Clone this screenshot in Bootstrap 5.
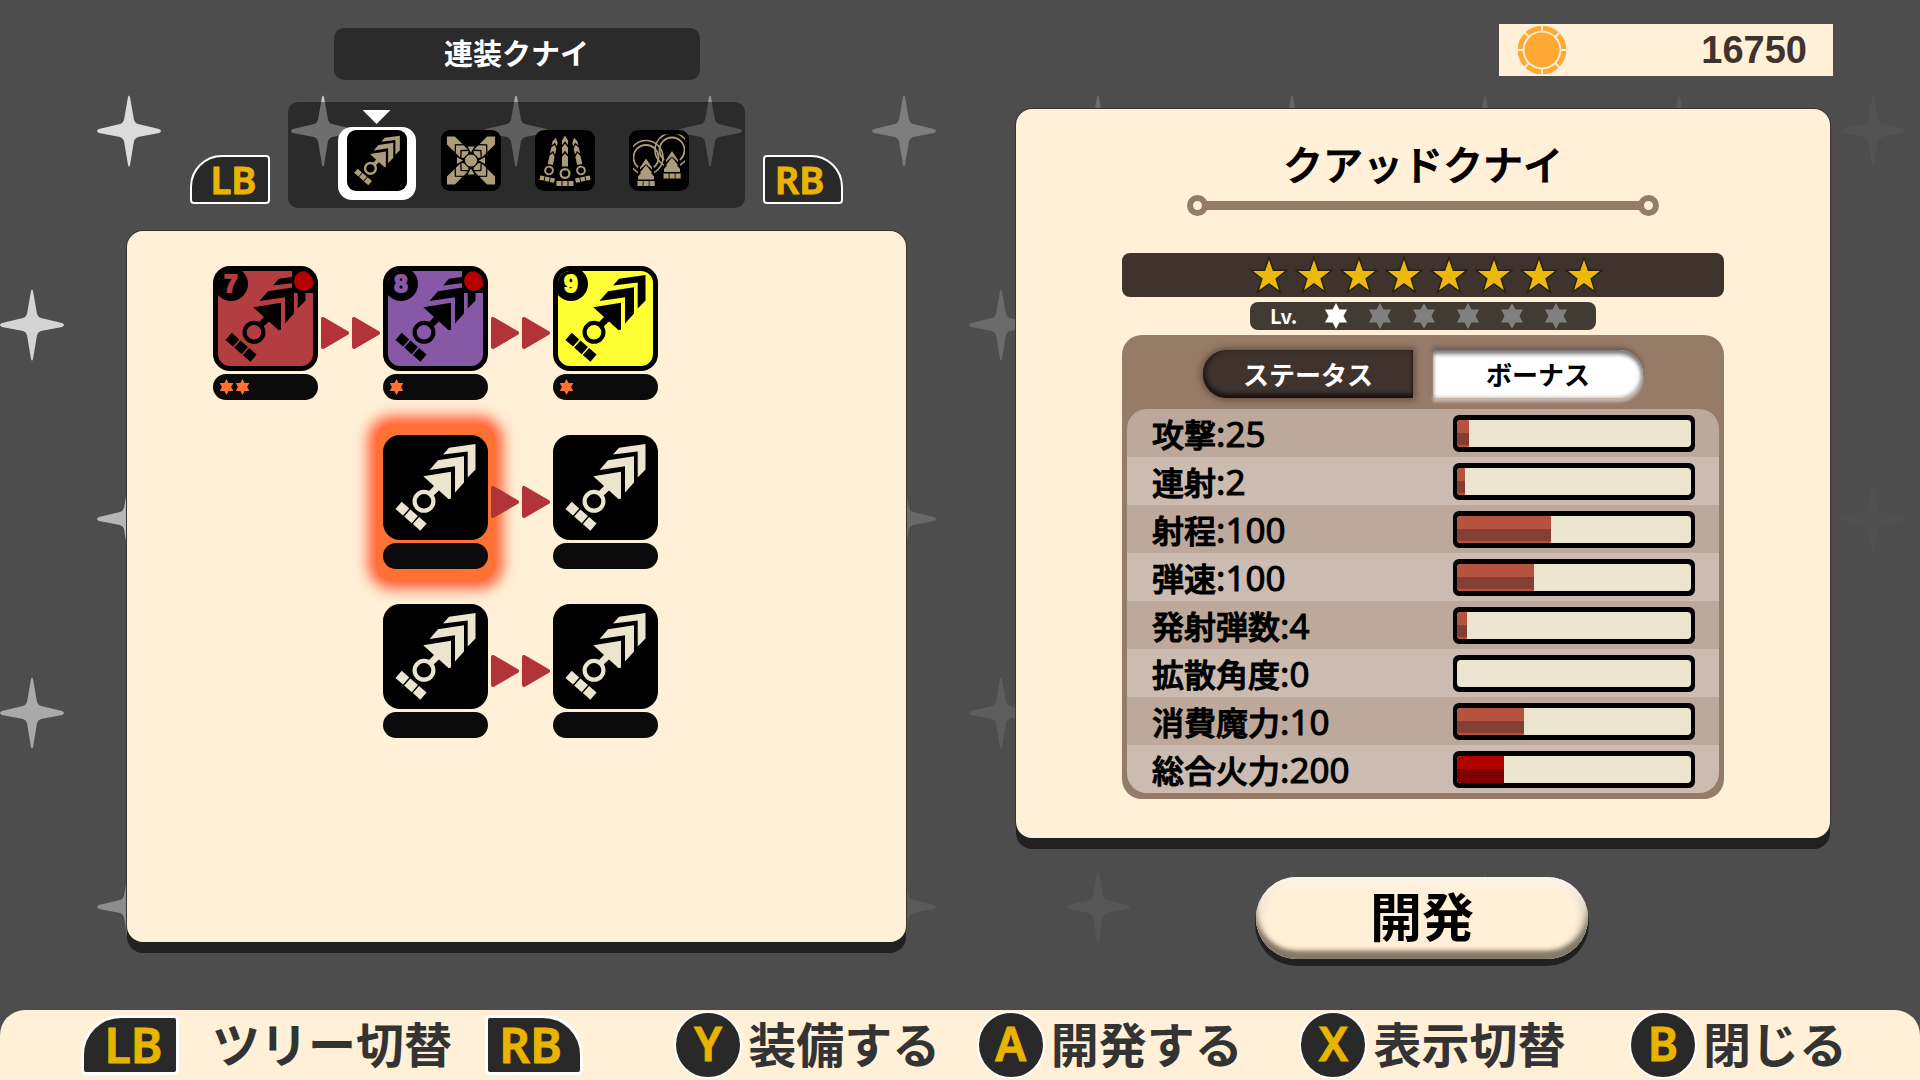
<!DOCTYPE html>
<html lang="ja">
<head>
<meta charset="utf-8">
<meta name="viewport" content="width=device-width, initial-scale=1">
<title>連装クナイ</title>
<link href="https://cdn.jsdelivr.net/npm/bootstrap@5.3.0/dist/css/bootstrap.min.css" rel="stylesheet">
<style>
:root{--cream:#fff0d7;--ink:#292929;--gold:#e8b400;--brown:#967b68;--dark:#3f332e}
body{background:#4d4d4d;font-family:"Noto Sans CJK JP",sans-serif;color:#000;overflow-x:hidden}
button{font-family:inherit;border:0;padding:0;background:none}
.sky{position:absolute;inset:0;width:100%;height:100%;z-index:-1}
.stage{padding:24px 87px 0 127px;gap:110px}
.col-tree{flex:779 1 0;padding-top:4px}
.col-info{flex:817 1 0}
.panel{background:var(--cream);border-radius:16px;box-shadow:0 11px 0 #212121,0 0 0 1px #3a3530}
/* header of the tree */
.tree-title{width:366px;height:52px;border-radius:10px;background:#2b2b2b;color:#fff;font-size:29px;line-height:48px;font-weight:700;margin-bottom:22px}
.switch{gap:18px;margin-bottom:23px}
.weapon-bar{width:457px;height:106px;border-radius:10px;background:rgba(0,0,0,.44);gap:34px;padding:28px 0 0 2px}
.weapon{position:relative;width:60px;height:61px}
.weapon svg{position:relative;display:block;width:60px;height:61px;background:#000;border-radius:9px;color:#ac9c79}
.weapon.active::before{content:"";position:absolute;inset:-3px -9px -9px;background:#fff;border-radius:14px}
.weapon.active::after{content:"";position:absolute;left:16px;top:-20px;width:28px;height:14px;background:#fff;clip-path:polygon(0 0,100% 0,50% 100%)}
.bumper{display:flex;align-items:center;justify-content:center;width:80px;height:49px;margin-bottom:4px;background:var(--ink);border:2px solid #fff;color:var(--gold);font:600 38px/45px "Noto Sans",sans-serif;-webkit-text-stroke:1px var(--gold)}
.bumper-l{border-radius:32px 4px 4px 4px;padding-left:7px}
.bumper-r{border-radius:4px 32px 4px 4px;padding-right:7px}
/* tree */
.tree{height:711px;padding:35px 86px}
.branches{display:grid;grid-template-columns:105px 65px 105px 65px 105px;row-gap:35px}
.node{position:relative;display:flex;flex-direction:column;gap:3px;width:105px}
.tile{position:relative;display:block;width:105px;height:105px;border-radius:17px;background:#000;color:#ebe5cf;overflow:hidden}
.tile svg{display:block;width:105px;height:105px}
.tile.ranked{border:5px solid #000;color:#000}
.tile.ranked svg{margin:-5px}
.fill-red{background:#b23e42}.fill-violet{background:#8658a6}.fill-yellow{background:#ffff33}
.rank{position:absolute;left:-4px;top:-4px;width:34px;height:34px;border-radius:50%;background:#000;text-align:center;font:700 24px/34px "Liberation Sans",sans-serif;-webkit-text-stroke:2px}
.fill-red .rank{color:#b23e42}.fill-violet .rank{color:#8658a6}.fill-yellow .rank{color:#ffff33}
.owned{position:absolute;right:-1px;top:-1px;width:22px;height:23px;background:#000}
.owned::after{content:"";position:absolute;left:2px;top:1px;width:20px;height:20px;border-radius:50%;background:#b40000}
.pips{display:flex;align-items:center;height:26px;border-radius:13px;background:#0b0b0b;padding-left:6px;gap:1px;color:#ff7033}
.pips svg{width:15px;height:16px}
.node.chosen::before{content:"";position:absolute;inset:-11px -7px -12px;border-radius:16px;background:#ff7033;box-shadow:0 0 14px 8px #ff6038}
.node.chosen>*{z-index:1}
.link-arrows{display:flex;align-items:center;justify-content:center;gap:3px;position:relative;z-index:2}
.link-arrows svg{width:28px;height:32px}
/* info */
.purse{width:334px;height:52px;background:var(--cream);padding:0 26px 0 18px;color:var(--dark);font:700 38px/52px "Liberation Sans",sans-serif;margin-bottom:33px}
.info{height:729px;margin-right:3px;padding:28px 106px 0}
.info-name{font-size:40px;line-height:52px;font-weight:500;margin:0 0 5px;-webkit-text-stroke:1px}
.rule{display:flex;width:472px;height:22px;margin:0 auto 37px;align-items:center}
.rule i{flex:none;width:21px;height:21px;border:6px solid var(--brown);border-radius:50%}
.rule b{flex:1;height:9px;background:var(--brown);margin:0 -2px}
.rating{height:44px;border-radius:8px;background:var(--dark);gap:7px;margin-bottom:5px;padding-left:7px}
.rating svg{width:38px;height:38px}
.level{width:346px;height:28px;border-radius:8px;background:#413b33;margin:0 auto 5px;color:#fff;font-size:20px;line-height:28px;font-weight:700;gap:20px;padding-left:20px}
.level svg{width:24px;height:26px;color:#808080}
.level svg.on{color:#fff}
.level span{width:34px}
.sheet{background:var(--brown);border-radius:20px;padding:15px 5px 6px}
.modes{gap:20px;margin-bottom:11px}
.mode{width:210px;height:48px;font-size:26px;line-height:46px;font-weight:700}
.mode-status{border-radius:24px 0 0 24px;background:#3f332e;color:#fff;box-shadow:inset 0 -4px 4px #17110f,inset 3px 0 4px #2a211e,0 0 6px 2px rgba(60,40,30,.55)}
.mode-bonus{border-radius:0 24px 24px 0;background:#fff;color:#000;box-shadow:inset 0 4px 4px #777,inset -2px 0 4px #aaa,0 4px 3px rgba(255,255,255,.45),0 -3px 4px rgba(60,40,30,.4)}
.stats{width:100%;border-radius:20px;overflow:hidden;border-collapse:collapse}
.stats tr{height:48px;background:#cbbbb1}
.stats tr:nth-child(odd){background:#bda99b}
.stats th{padding:0 0 0 25px;font-size:32px;line-height:48px;font-weight:500;white-space:nowrap;-webkit-text-stroke:1px}
.stats th span{font:400 35px/40px "Noto Sans",sans-serif}
.stats td{padding:0 24px 0 0;width:266px}
.gauge{height:37px;border:solid #000;border-width:5px 4px;border-radius:6px;background:#000}
.gauge div{height:27px;background:#ebe5cf;border-radius:4px;overflow:hidden}
.gauge span{display:block;height:27px;background:linear-gradient(#b5533e 48%,#833f34 48% 93%,#b5533e 93%)}
.gauge .total{background:linear-gradient(#b20000 48%,#800000 48%)}
.develop{width:332px;height:82px;border-radius:41px;background:var(--cream);font-size:52px;line-height:76px;padding-bottom:6px;font-weight:700;margin:39px 5px 0 0;box-shadow:0 6px 0 1px #212121,inset 0 -8px 4px #857868,inset 0 6px 8px #fff8ef,inset -3px -4px 10px #a89884,inset 3px 0 8px #d8c8b2}
/* footer */
.guide{display:grid;grid-template-columns:594fr 303fr 323fr 330fr 215fr;height:70px;padding:0 73px 0 81px;background:var(--cream);border-radius:25px 25px 0 0;color:#333;font-size:48px;line-height:60px;font-weight:700}
.guide a{color:inherit;text-decoration:none;display:flex;align-items:center;white-space:nowrap;gap:6px}
.guide .bumper{width:98px;height:60px;margin:0;border-width:3px;border-radius:40px 5px 5px 5px;font-size:48px;line-height:54px}
.guide .bumper-r{border-radius:5px 40px 5px 5px}
.guide .trees{gap:33px}
.caption-text{padding-bottom:7px}
.pad{flex:none;display:block;width:68px;height:68px;border-radius:50%;border:2px solid #fff;background:var(--ink);color:var(--gold);text-align:center;font:600 46px/60px "Noto Sans",sans-serif;-webkit-text-stroke:1px var(--gold)}
</style>
</head>
<body>
<svg width="0" height="0" class="position-absolute" aria-hidden="true">
<defs>
<path id="spark" d="M-32 0Q-32-1-30-2L-9-7Q-6-8-5-11L-1-34Q0-37 1-34L5-11Q6-8 9-7L30-2Q32-1 32 0Q32 1 30 2L9 6Q6 7 5 10L1 34Q0 37-1 34L-5 10Q-6 7-9 6L-30 2Q-32 1-32 0Z" fill="#fff"/>
<symbol id="kunai" viewBox="0 0 105 105"><g fill="currentColor"><path d="M60 19.5 66 12.7 92.5 9V34.5L84.7 42.5V16.5Z"/><path d="M46.500 35 55 25.300 81 21.300V47.500L72 57.500V31.200Z"/><path d="M40.300 41.300 68 36.700V63.500L65.700 64.300 56 55.500 49 62 44.500 57.500 51 51Z"/><g transform="rotate(41 28 81.300)"><path d="M11.500 76.500H21.500V86H11.500ZM23 76.500H33V86H23ZM34.500 76.500H44.500V86H34.500Z"/></g></g><circle cx="41" cy="66.300" r="9.400" fill="none" stroke="currentColor" stroke-width="4.200"/></symbol>
<symbol id="hex" viewBox="0 0 24 26"><path fill="currentColor" d="M12 0 15.400 6.500H23L19.500 13 23 19.500H15.400L12 26 8.600 19.500H1L4.500 13 1 6.500H8.600Z"/></symbol>
<symbol id="star" viewBox="0 0 38 38"><path d="M19 1.500 23.400 14.300H37L26.200 22.700 30.300 36 19 28 7.700 36 11.800 22.700 1 14.300H14.600Z" fill="#ecb80a" stroke="#282110" stroke-width="1.500"/></symbol>
<symbol id="tri" viewBox="0 0 28 32"><path d="M2 2V30L26 16Z" fill="#b23338" stroke="#b23338" stroke-width="4" stroke-linejoin="round"/></symbol>
<g id="arm"><path fill="currentColor" d="M0-34 5.600-28.400V-9L3-7H-3L-5.600-9V-28.400Z"/><path d="M-7-15.500 0-22 7-15.500M-6-8.500 0-14 6-8.500" fill="none" stroke="#000" stroke-width="1.300"/></g>
<g id="spear"><path fill="currentColor" d="M30 5 33 10V36H27V10Z"/><path d="M26 17 30 12 34 17M26 26.500 30 21.500 34 26.500" fill="none" stroke="#000" stroke-width="1.500"/><circle cx="30" cy="43" r="4.400" fill="none" stroke="currentColor" stroke-width="2.200"/><path fill="currentColor" d="M21.500 50.500H26.500V55.500H21.500ZM27.500 50.500H32.500V55.500H27.500ZM33.500 50.500H38.500V55.500H33.500Z"/></g>
<g id="ship"><circle cx="17" cy="27" r="12.500" fill="none" stroke="currentColor" stroke-width="1.800"/><circle cx="17" cy="27" r="17" fill="none" stroke="currentColor" stroke-width="1.600"/><path d="M17 26 25 37 25 49H9V37Z" fill="#000"/><path fill="currentColor" d="M17 28 23 37V39L17 33.500 11 39V37ZM17 34.500 23 42 22 42.500 25 46V49H9V46L12 42.500 11 42ZM8.500 50.500H13.700V55.500H8.500ZM14.500 50.500H19.700V55.500H14.500ZM20.500 50.500H25.700V55.500H20.500Z"/></g>
<clipPath id="field"><path d="M4 4H56V57H4Z"/></clipPath>
</defs>
</svg>

<svg class="sky" viewBox="0 0 1920 1080" preserveAspectRatio="xMidYMid slice" aria-hidden="true">
<use href="#spark" x="129" y="131" opacity=".8"/><use href="#spark" x="323" y="131" opacity=".68"/><use href="#spark" x="516" y="131" opacity=".52"/><use href="#spark" x="710" y="131" opacity=".4"/><use href="#spark" x="904" y="131" opacity=".28"/><use href="#spark" x="1098" y="131" opacity=".18"/><use href="#spark" x="1292" y="131" opacity=".14"/><use href="#spark" x="1485" y="131" opacity=".1"/><use href="#spark" x="1679" y="131" opacity=".07"/><use href="#spark" x="1873" y="131" opacity=".04"/>
<use href="#spark" x="32" y="325" opacity=".76"/><use href="#spark" x="1001" y="325" opacity=".17"/>
<use href="#spark" x="129" y="519" opacity=".6"/><use href="#spark" x="904" y="519" opacity=".16"/><use href="#spark" x="1873" y="519" opacity=".02"/>
<use href="#spark" x="32" y="713" opacity=".52"/><use href="#spark" x="1001" y="713" opacity=".09"/>
<use href="#spark" x="129" y="907" opacity=".36"/><use href="#spark" x="904" y="907" opacity=".08"/><use href="#spark" x="1098" y="907" opacity=".05"/><use href="#spark" x="1292" y="907" opacity=".04"/><use href="#spark" x="1485" y="907" opacity=".03"/>
</svg>

<div class="d-flex flex-column min-vh-100">
<main class="stage d-flex flex-grow-1">
  <section class="col-tree">
    <h1 class="tree-title mx-auto text-center mt-0">連装クナイ</h1>
    <div class="switch d-flex justify-content-center align-items-end">
      <button type="button" class="bumper bumper-l">LB</button>
      <div class="weapon-bar d-flex justify-content-center align-items-start">
        <button type="button" class="weapon active" aria-label="連装クナイ"><svg viewBox="0 0 105 105"><use href="#kunai"/></svg></button>
        <button type="button" class="weapon" aria-label="十字"><svg viewBox="0 0 60 60"><g transform="translate(30 30)"><use href="#arm" transform="rotate(45)"/><use href="#arm" transform="rotate(135)"/><use href="#arm" transform="rotate(225)"/><use href="#arm" transform="rotate(315)"/><circle r="6.500" fill="currentColor" stroke="#000"/><path fill="currentColor" d="M-3.500-14H3.500L0-8ZM-3.500 14H3.500L0 8ZM-14-3.500V3.500L-8 0ZM14-3.500V3.500L8 0Z"/></g></svg></button>
        <button type="button" class="weapon" aria-label="三連"><svg viewBox="0 0 60 60"><use href="#spear"/><use href="#spear" transform="translate(16.400 28.800) rotate(12) scale(.88) translate(-30 -30)"/><use href="#spear" transform="translate(43.600 28.800) rotate(-12) scale(.88) translate(-30 -30)"/></svg></button>
        <button type="button" class="weapon" aria-label="円陣"><svg viewBox="0 0 60 60"><g clip-path="url(#field)"><use href="#ship" x="26" y="-7.500"/><use href="#ship"/></g></svg></button>
      </div>
      <button type="button" class="bumper bumper-r">RB</button>
    </div>
    <div class="panel tree">
      <div class="branches">
        <button type="button" class="node"><span class="tile ranked fill-red"><svg><use href="#kunai"/></svg><span class="rank">7</span><span class="owned"></span></span><span class="pips"><svg><use href="#hex"/></svg><svg><use href="#hex"/></svg></span></button>
        <div class="link-arrows"><svg><use href="#tri"/></svg><svg><use href="#tri"/></svg></div>
        <button type="button" class="node"><span class="tile ranked fill-violet"><svg><use href="#kunai"/></svg><span class="rank">8</span><span class="owned"></span></span><span class="pips"><svg><use href="#hex"/></svg></span></button>
        <div class="link-arrows"><svg><use href="#tri"/></svg><svg><use href="#tri"/></svg></div>
        <button type="button" class="node"><span class="tile ranked fill-yellow"><svg><use href="#kunai"/></svg><span class="rank">9</span></span><span class="pips"><svg><use href="#hex"/></svg></span></button>

        <div></div><div></div>
        <button type="button" class="node chosen" aria-label="クアッドクナイ"><span class="tile"><svg><use href="#kunai"/></svg></span><span class="pips"></span></button>
        <div class="link-arrows"><svg><use href="#tri"/></svg><svg><use href="#tri"/></svg></div>
        <button type="button" class="node" aria-label="クナイ"><span class="tile"><svg><use href="#kunai"/></svg></span><span class="pips"></span></button>

        <div></div><div></div>
        <button type="button" class="node" aria-label="クナイ"><span class="tile"><svg><use href="#kunai"/></svg></span><span class="pips"></span></button>
        <div class="link-arrows"><svg><use href="#tri"/></svg><svg><use href="#tri"/></svg></div>
        <button type="button" class="node" aria-label="クナイ"><span class="tile"><svg><use href="#kunai"/></svg></span><span class="pips"></span></button>
      </div>
    </div>
  </section>

  <section class="col-info d-flex flex-column">
    <div class="purse d-flex align-items-center justify-content-between align-self-end">
      <svg width="50" height="50" viewBox="-25 -25 50 50"><circle r="21.800" fill="none" stroke="#ffa834" stroke-width="5"/><path d="M0-25V25M-25 0H25M-18-18 18 18M-18 18 18-18" stroke="#fff0d7" stroke-width="2"/><circle r="17.500" fill="#ffa834"/></svg>
      <span>16750</span>
    </div>
    <div class="panel info">
      <h2 class="info-name text-center">クアッドクナイ</h2>
      <div class="rule"><i></i><b></b><i></i></div>
      <div class="rating d-flex justify-content-center align-items-center"><svg><use href="#star"/></svg><svg><use href="#star"/></svg><svg><use href="#star"/></svg><svg><use href="#star"/></svg><svg><use href="#star"/></svg><svg><use href="#star"/></svg><svg><use href="#star"/></svg><svg><use href="#star"/></svg></div>
      <div class="level d-flex align-items-center"><span>Lv.</span><svg class="on"><use href="#hex"/></svg><svg><use href="#hex"/></svg><svg><use href="#hex"/></svg><svg><use href="#hex"/></svg><svg><use href="#hex"/></svg><svg><use href="#hex"/></svg></div>
      <div class="sheet">
        <div class="modes d-flex justify-content-center">
          <button type="button" class="mode mode-status">ステータス</button>
          <button type="button" class="mode mode-bonus">ボーナス</button>
        </div>
        <table class="stats">
          <tbody>
          <tr><th scope="row">攻撃<span>:25</span></th><td><div class="gauge"><div><span style="width:5%"></span></div></div></td></tr>
          <tr><th scope="row">連射<span>:2</span></th><td><div class="gauge"><div><span style="width:3.4%"></span></div></div></td></tr>
          <tr><th scope="row">射程<span>:100</span></th><td><div class="gauge"><div><span style="width:40%"></span></div></div></td></tr>
          <tr><th scope="row">弾速<span>:100</span></th><td><div class="gauge"><div><span style="width:33%"></span></div></div></td></tr>
          <tr><th scope="row">発射弾数<span>:4</span></th><td><div class="gauge"><div><span style="width:4.3%"></span></div></div></td></tr>
          <tr><th scope="row">拡散角度<span>:0</span></th><td><div class="gauge"><div><span style="width:0%"></span></div></div></td></tr>
          <tr><th scope="row">消費魔力<span>:10</span></th><td><div class="gauge"><div><span style="width:28.5%"></span></div></div></td></tr>
          <tr><th scope="row">総合火力<span>:200</span></th><td><div class="gauge"><div><span class="total" style="width:20%"></span></div></div></td></tr>
          </tbody>
        </table>
      </div>
    </div>
    <button type="button" class="develop align-self-center">開発</button>
  </section>
</main>

<footer class="guide">
  <a href="#" class="trees"><span class="bumper bumper-l">LB</span><span class="caption-text">ツリー切替</span><span class="bumper bumper-r">RB</span></a>
  <a href="#"><span class="pad">Y</span><span class="caption-text">装備する</span></a>
  <a href="#"><span class="pad">A</span><span class="caption-text">開発する</span></a>
  <a href="#"><span class="pad">X</span><span class="caption-text">表示切替</span></a>
  <a href="#"><span class="pad">B</span><span class="caption-text">閉じる</span></a>
</footer>
</div>
<script src="https://cdn.jsdelivr.net/npm/bootstrap@5.3.0/dist/js/bootstrap.bundle.min.js"></script>
</body>
</html>
